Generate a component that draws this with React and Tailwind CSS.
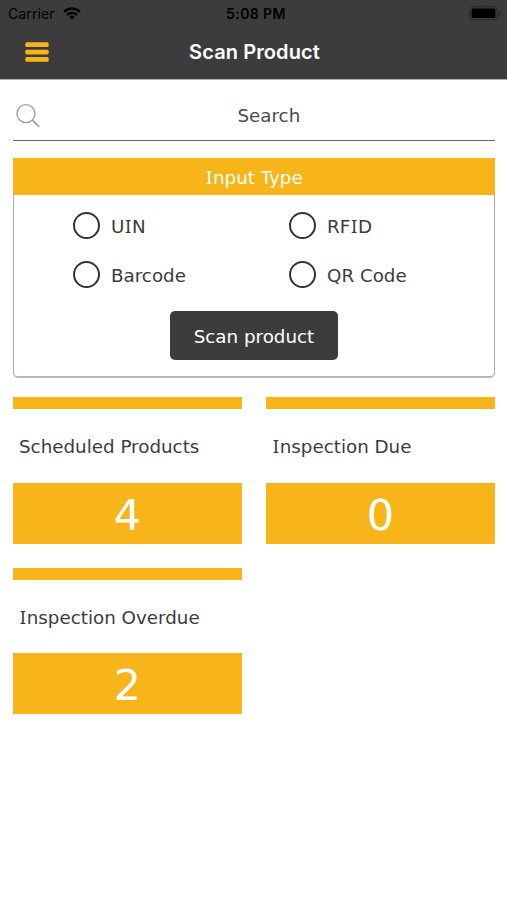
import { Fragment, useState } from "react";

const inputTypes = ["UIN", "RFID", "Barcode", "QR Code"];

const stats = [
  { label: "Scheduled Products", count: 4 },
  { label: "Inspection Due", count: 0 },
  { label: "Inspection Overdue", count: 2 },
];

const WifiIcon = () => (
  <svg width="18" height="13" viewBox="0 0 18 13" fill="none">
    <path d="M1.1 4.8a11.2 11.2 0 0 1 15.8 0" stroke="#000" strokeWidth="2.4" />
    <path d="M4 7.9a7.1 7.1 0 0 1 10 0" stroke="#000" strokeWidth="2.3" />
    <path d="M9 12.6 6.3 9.9a3.9 3.9 0 0 1 5.4 0Z" fill="#000" />
  </svg>
);

const BatteryIcon = () => (
  <svg width="32" height="15" viewBox="0 0 32 15" fill="none">
    <rect x="0.8" y="0.8" width="27.4" height="13" rx="3.6" stroke="#2a2a2a" strokeWidth="1.1" />
    <rect x="2.6" y="2.6" width="23.8" height="9.4" rx="1.6" fill="#000" />
    <path d="M29.8 5v4.6c1-.4 1.6-1.3 1.6-2.3S30.8 5.4 29.8 5Z" fill="#242424" />
  </svg>
);

const MenuIcon = () => (
  <svg width="24" height="20" viewBox="0 0 24 20" fill="#f8b51a">
    <rect x="0.3" y="0.3" width="23.4" height="4.7" rx="1.6" />
    <rect x="0.3" y="7.7" width="23.4" height="4.7" rx="1.6" />
    <rect x="0.3" y="15.1" width="23.4" height="4.7" rx="1.6" />
  </svg>
);

const SearchIcon = () => (
  <svg width="26" height="26" viewBox="0 0 26 26" fill="none" stroke="#9d9d9d">
    <circle cx="10.5" cy="10.5" r="9.5" strokeWidth="1.4" />
    <path d="m17.3 17.3 7.2 7.2" strokeWidth="1.8" />
  </svg>
);

const Label = ({ children }) => (
  <span>
    {children.split("I").map((part, i) => (
      <Fragment key={i}>
        {i > 0 && (
          <span className="mx-[0.7px] font-['Noto_Sans',sans-serif] text-[1.02em] leading-none">I</span>
        )}
        {part}
      </Fragment>
    ))}
  </span>
);

const StatCard = ({ label, count }) => (
  <section>
    <div className="h-3 bg-[#f8b51a]" />
    <h2 className="flex h-[73.5px] items-center pl-1.5 pt-0.5">
      <Label>{label}</Label>
    </h2>
    <div className="flex h-[61px] items-center justify-center bg-[#f8b51a] pt-1 text-[43px] leading-none text-white">
      {count}
    </div>
  </section>
);

const App = () => {
  const [search, setSearch] = useState("");
  const [type, setType] = useState(null);

  return (
    <div className="min-h-[900px] w-full bg-white font-['DejaVu_Sans',sans-serif] text-[18.3px] text-[#3c3c3c]">
      <header className="h-[79px] bg-[#3c3c3c] font-['Inter',sans-serif]">
        <div className="grid h-[27px] grid-cols-3 items-center pl-2 pr-1.5 text-[14px] leading-none text-black">
          <div className="flex items-center gap-2">
            <span className="tracking-[0.1px]">Carrier</span>
            <WifiIcon />
          </div>
          <span className="pl-[3px] text-center font-semibold tracking-[0.4px]">5:08 PM</span>
          <div className="flex justify-end">
            <BatteryIcon />
          </div>
        </div>
        <div className="grid h-[50px] grid-cols-[80px_1fr_80px] items-center">
          <button aria-label="Open menu" className="ml-[25px] w-6">
            <MenuIcon />
          </button>
          <h1 className="pl-0.5 text-center text-[20px] font-semibold leading-none tracking-[0.1px] text-white">
            Scan Product
          </h1>
        </div>
      </header>
      <div className="h-px bg-[#b0b0b0]" />

      <main className="pl-[13px] pr-3 pt-[11px]">
        <label className="flex h-[50px] items-center border-b border-[#6a6a6a] pl-[3px]">
          <SearchIcon />
          <input
            type="text"
            value={search}
            onChange={(e) => setSearch(e.target.value)}
            placeholder="Search"
            aria-label="Search"
            className="h-full w-full pl-0.5 text-center outline-none placeholder:text-[#4b4b4b]"
          />
        </label>

        <section className="mt-[17px] flex h-[220px] flex-col rounded-b-[5px] border-x border-b-2 border-x-[#a8a8a8] border-b-[#b8b8b8]">
          <h2 className="-mx-px flex h-[37px] items-center justify-center bg-[#f8b51a] pt-0.5 text-white">
            <Label>Input Type</Label>
          </h2>
          <div className="grid grid-cols-[216px_1fr] gap-y-[21px] pl-[59px] pt-[17px]">
            {inputTypes.map((name) => (
              <button
                key={name}
                role="radio"
                aria-checked={type === name}
                onClick={() => setType(name)}
                className="flex h-7 items-center gap-2.5"
              >
                <span className="-mt-px flex size-[27px] items-center justify-center rounded-full border-2 border-[#333333]">
                  {type === name && <span className="size-3.5 rounded-full bg-[#333333]" />}
                </span>
                <span className="pl-px pt-0.5">
                  <Label>{name}</Label>
                </span>
              </button>
            ))}
          </div>
          <button className="ml-[156px] mt-[22px] h-[49px] w-[168px] rounded-[5px] bg-[#3c3c3c] pt-0.5 text-white">
            Scan product
          </button>
        </section>

        <div className="mt-[19px] grid grid-cols-2 gap-6">
          {stats.map((stat) => (
            <StatCard key={stat.label} {...stat} />
          ))}
        </div>
      </main>
    </div>
  );
};

export default App;
